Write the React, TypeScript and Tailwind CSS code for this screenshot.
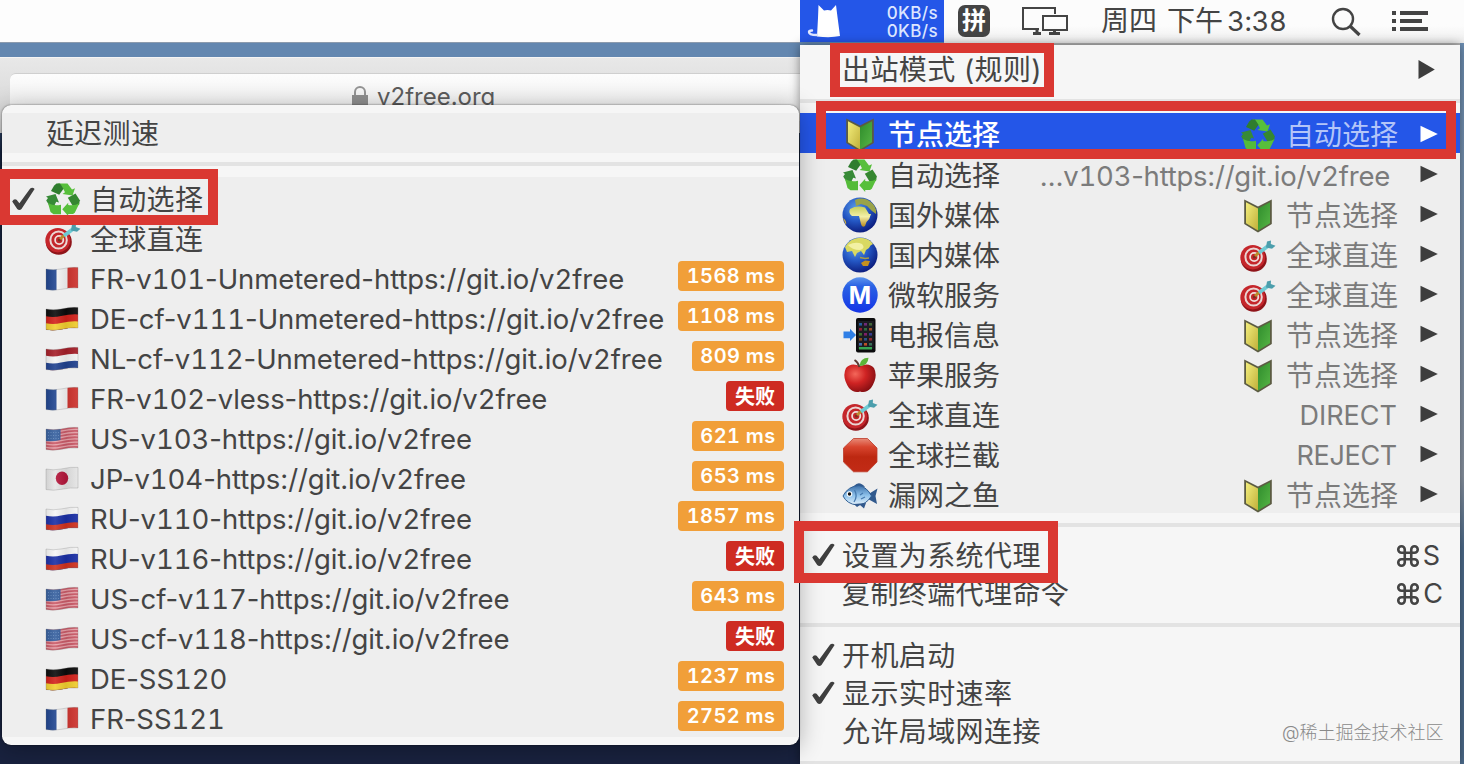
import React from "react";

type IconName =
  | "recycle" | "target" | "fr" | "de" | "nl" | "us" | "jp" | "ru"
  | "beginner" | "africa" | "asia" | "metro" | "phone" | "apple" | "stop" | "fish";

const FONT = "font-['Inter','Noto_Sans_CJK_SC',sans-serif]";
const FLAG_SHAPE = "M1 3 Q8 4.6 16 3 Q26 .6 33 1.4 V22 Q26 21.4 17 23.2 Q8 25 1 23.6 Z";

function Defs() {
  return (
    <svg className="absolute h-0 w-0" aria-hidden="true">
      <defs>
        <linearGradient id="wave" x1="0" y1="0" x2="1" y2="0">
          <stop offset="0" stopColor="#000" stopOpacity=".1" />
          <stop offset=".3" stopColor="#fff" stopOpacity=".1" />
          <stop offset=".62" stopColor="#000" stopOpacity=".08" />
          <stop offset="1" stopColor="#fff" stopOpacity=".08" />
        </linearGradient>
        <clipPath id="flag">
          <path d={FLAG_SHAPE} />
        </clipPath>
        <radialGradient id="ocean" cx=".38" cy=".3" r=".75">
          <stop offset="0" stopColor="#5a9be6" />
          <stop offset=".5" stopColor="#2457c4" />
          <stop offset="1" stopColor="#0a1878" />
        </radialGradient>
        <linearGradient id="land" x1="0" y1="0" x2="0" y2="1">
          <stop offset="0" stopColor="#c8cf5a" />
          <stop offset=".5" stopColor="#f3f0a8" />
          <stop offset="1" stopColor="#b98a1e" />
        </linearGradient>
        <linearGradient id="metroBlue" x1="0" y1="0" x2="0" y2="1">
          <stop offset="0" stopColor="#5b93ec" />
          <stop offset=".25" stopColor="#2a62e4" />
          <stop offset="1" stopColor="#1434e6" />
        </linearGradient>
        <radialGradient id="appleRed" cx=".35" cy=".35" r=".75">
          <stop offset="0" stopColor="#f4675a" />
          <stop offset=".45" stopColor="#cf2323" />
          <stop offset="1" stopColor="#7c0c10" />
        </radialGradient>
        <linearGradient id="stopRed" x1="0" y1="0" x2="0" y2="1">
          <stop offset="0" stopColor="#e88a77" />
          <stop offset=".25" stopColor="#d8452e" />
          <stop offset=".55" stopColor="#bd2811" />
          <stop offset="1" stopColor="#c22b16" />
        </linearGradient>
        <linearGradient id="leafYellow" x1="0" y1="0" x2="1" y2="1">
          <stop offset="0" stopColor="#f3ee7c" />
          <stop offset="1" stopColor="#c0b03a" />
        </linearGradient>
        <linearGradient id="leafGreen" x1="0" y1="0" x2="1" y2="1">
          <stop offset="0" stopColor="#2f8c2c" />
          <stop offset="1" stopColor="#56b545" />
        </linearGradient>
        <linearGradient id="fishBlue" x1="0" y1="0" x2="0" y2="1">
          <stop offset="0" stopColor="#3a6ea8" />
          <stop offset=".5" stopColor="#8cc0ea" />
          <stop offset="1" stopColor="#e4f1fb" />
        </linearGradient>
      </defs>
    </svg>
  );
}

function Flag({ children }: { children: React.ReactNode }) {
  return (
    <svg viewBox="0 0 34 26" className="h-[26px] w-[34px]">
      <g clipPath="url(#flag)">
        {children}
        <rect width="34" height="26" fill="url(#wave)" />
      </g>
      <path d={FLAG_SHAPE} fill="none" stroke="#777" strokeOpacity=".35" strokeWidth=".8" />
    </svg>
  );
}

function wavyBand(y: number, fill: string) {
  return <path d={`M0 ${y + 0.6} Q8 ${y + 2.4} 16 ${y + 0.6} Q26 ${y - 1.8} 34 ${y - 1} V30 H0 Z`} fill={fill} />;
}

function Icon({ name }: { name: IconName }) {
  switch (name) {
    case "fr":
      return (
        <Flag>
          <rect width="12" height="26" fill="#1f448f" />
          <rect x="11.5" width="12" height="26" fill="#f6f6f6" />
          <rect x="22.5" width="12" height="26" fill="#cf342f" />
        </Flag>
      );
    case "de":
      return (
        <Flag>
          <rect width="34" height="26" fill="#0b0b0b" />
          {wavyBand(9.5, "#d3221b")}
          {wavyBand(16.5, "#f2cf2f")}
        </Flag>
      );
    case "nl":
      return (
        <Flag>
          <rect width="34" height="26" fill="#a51e28" />
          {wavyBand(9, "#f4f4f4")}
          {wavyBand(16, "#20418f")}
        </Flag>
      );
    case "ru":
      return (
        <Flag>
          <rect width="34" height="26" fill="#f6f6f6" />
          {wavyBand(9, "#1a2fa6")}
          {wavyBand(17.5, "#d0321f")}
        </Flag>
      );
    case "us":
      return (
        <Flag>
          <rect width="34" height="26" fill="#cb5a68" />
          {[4.5, 7.7, 10.9, 14.1, 17.3, 20.5].map((y) => (
            <path key={y} d={`M0 ${y + 0.6} Q8 ${y + 2.4} 16 ${y + 0.6} Q26 ${y - 1.8} 34 ${y - 1}`} fill="none" stroke="#e8a3aa" strokeWidth="1.3" />
          ))}
          <path d="M0 0 H15.5 V14 Q8 15.8 0 15 Z" fill="#36609f" />
          <path d="M3 6.5h11M3 9.5h11M3 12.5h11" stroke="#6a8fc2" strokeWidth=".8" strokeDasharray="1 1.5" />
        </Flag>
      );
    case "jp":
      return (
        <Flag>
          <rect width="34" height="26" fill="#e6e6e6" />
          <ellipse cx="17" cy="12.3" rx="6.2" ry="6.8" fill="#b5173c" />
        </Flag>
      );
    case "recycle":
      return (
        <svg viewBox="0 0 36 34" className="h-[34px] w-9">
          <path d="M12.5 1.5 H22.5 L27 7.5 L30 6.2 L27.5 13.5 L17.5 12 L20 10.3 L18 6.5 Z" fill="#57bf3b" />
          <path d="M11.5 1.5 H15 L18.5 6.8 L14.2 12.8 L6 9 L9 3.8 Z" fill="#2f7d2e" />
          <path d="M1 14.5 L10.5 12 L14 20.5 L11.2 19.8 L9.4 23.4 L4 23 L1.2 18.5 L3 16 Z" fill="#378a37" />
          <path d="M3 21 Q9 24.5 16 22.8 V32.2 H8.5 L5.5 30 Z" fill="#54bb39" />
          <path d="M22.8 15.8 L30.5 11.5 L34.8 18.2 L34 23 L27.5 23.5 Z" fill="#358730" />
          <path d="M17.3 27.3 L23.2 20.8 V23 Q30 24 34.5 21 L29.8 30.8 L28 32 H23.2 V34 Z" fill="#57bf3b" />
        </svg>
      );
    case "target":
      return (
        <svg viewBox="0 0 36 32" className="h-8 w-9">
          <ellipse cx="13.8" cy="18.9" rx="13" ry="12.8" fill="#8f1419" />
          <ellipse cx="12.8" cy="17.2" rx="12.4" ry="12.2" fill="#c5262b" />
          <ellipse cx="13.6" cy="17" rx="8.2" ry="8.6" fill="none" stroke="#ead6d4" strokeWidth="2" />
          <circle cx="14.2" cy="17" r="4.1" fill="#c5262b" stroke="#efdedb" strokeWidth="1.8" />
          <circle cx="14.4" cy="17" r="1.6" fill="#7d3020" />
          <path d="M15 16 L19.5 12" stroke="#bb8b2d" strokeWidth="3" />
          <path d="M19 12.8 L29 5.2" stroke="#6fcad3" strokeWidth="3.8" />
          <path d="M26 7.5 L27 1.5 L31 .5 L30.8 4 L35.5 5.8 L32 8.8 Z" fill="#4b9eac" />
        </svg>
      );
    case "beginner":
      return (
        <svg viewBox="0 0 36 36" className="h-9 w-9">
          <path d="M4.2 1.5 L18 8.5 L31.8 1.5 V26 L18 34.5 L4.2 26 Z" fill="#5b5b42" />
          <path d="M6 4.2 L18 10.4 V32.4 L6 25.2 Z" fill="url(#leafYellow)" />
          <path d="M30 4.2 L18 10.4 V32.4 L30 25.2 Z" fill="url(#leafGreen)" />
        </svg>
      );
    case "africa":
      return (
        <svg viewBox="0 0 36 36" className="h-9 w-9">
          <circle cx="18" cy="18" r="17.5" fill="url(#ocean)" />
          <path d="M13 3 Q22 -1 30 6 Q35 11 34 17 L30 14 L25 9 L19 7 L14 9 Z" fill="#9aa349" />
          <path d="M8 12 Q15 8 23 10.5 L27 17 H29 Q28 22 24.5 25 L23 29 Q20 31 19 27 L17 19 H10 Q6 16 8 12 Z" fill="url(#land)" />
          <path d="M1 21 Q5 24 4 28 Z" fill="#d5b33d" />
        </svg>
      );
    case "asia":
      return (
        <svg viewBox="0 0 36 36" className="h-9 w-9">
          <circle cx="18" cy="18" r="17.5" fill="url(#ocean)" />
          <path d="M3 10 Q8 1 18 .8 Q27 1 31 7 Q28 8 27 11 L24 13 L22 18 L19 14 L15 16 L13 20 L10 14 L5 15 Z" fill="#d9d962" />
          <path d="M6 8 Q14 4 20 7 Q24 11 18 13 Q10 13 6 8Z" fill="#f2f1a4" />
          <path d="M19 26 L23 23.5 L28 24 L26 29 L21 29 Z" fill="#c5911f" />
          <path d="M18 20.5 L23 21.5 L27 21" stroke="#a99d44" strokeWidth="1.3" fill="none" />
        </svg>
      );
    case "metro":
      return (
        <svg viewBox="0 0 36 36" className="h-9 w-9">
          <circle cx="18" cy="18" r="17.7" fill="url(#metroBlue)" />
          <text x="18" y="26.8" textAnchor="middle" className="fill-white font-['Inter'] text-[24px] font-bold">M</text>
        </svg>
      );
    case "phone":
      return (
        <svg viewBox="0 0 36 36" className="h-9 w-9">
          <rect x="14" y="1" width="19.5" height="34.5" rx="2" fill="#0b0b0d" />
          <rect x="15.8" y="4" width="16" height="28" fill="#1b1c22" />
          {[6, 11, 16, 21, 26].map((y, i) => (
            <g key={y}>
              <rect x="17" y={y} width="3" height="2.6" fill={["#245c9c", "#8f2038", "#3d6e2d", "#8a4c1d", "#4467a8"][i]} />
              <rect x="22" y={y} width="3" height="2.6" fill={["#6d2b77", "#2f6c3f", "#7e1f68", "#2c518a", "#ba5127"][i]} />
              <rect x="27" y={y} width="3" height="2.6" fill={["#416537", "#9a4e28", "#353b8d", "#902b30", "#396d59"][i]} />
            </g>
          ))}
          <rect x="17" y="30" width="13" height="2.5" fill="#36a653" />
          <path d="M1.5 14.6 H8 V11.8 L14 18 L8 24 V21.3 H1.5 Z" fill="#2f7fe6" />
        </svg>
      );
    case "apple":
      return (
        <svg viewBox="0 0 36 36" className="h-9 w-9">
          <path d="M18 9 Q27 5 32 11 Q36.5 20 29 31 Q24 36.5 18 34.5 Q12 36.5 7 31 Q-.5 20 4 11 Q9 5 18 9 Z" fill="url(#appleRed)" />
          <path d="M17.5 10 Q16 5 12.5 3" stroke="#5c3b33" strokeWidth="2" fill="none" />
          <path d="M17.5 9 Q18 1 26.5 .8 Q26 9 17.5 9 Z" fill="#5cb438" />
        </svg>
      );
    case "stop":
      return (
        <svg viewBox="0 0 36 36" className="h-9 w-9">
          <path d="M11.5 1.5 H25.5 L35 11 V25 L25.5 34.8 H11.5 L1.5 25 V11 Z" fill="url(#stopRed)" stroke="#bc3a28" strokeWidth=".8" />
        </svg>
      );
    case "fish":
      return (
        <svg viewBox="0 0 36 36" className="h-9 w-9">
          <path d="M12 9 Q17 3 23 10 Z" fill="#31598d" />
          <path d="M25 18 L35.5 11.5 L33.5 19 L35 27 L26 22 Z" fill="#31598d" />
          <path d="M1 19 Q6 9 17 8.5 Q25 10 29.5 19 Q24 28 15 28 Q5 27 1 19 Z" fill="url(#fishBlue)" stroke="#2e5d93" strokeWidth="1" />
          <path d="M12 27 L15 30 L18 28 L22 31.5 L24 26" fill="#31598d" />
          <path d="M12.5 13 Q16 19 12 25 M18 18 L21 16 M19 22 L23 20" stroke="#477aaf" fill="none" strokeWidth="1.3" />
          <circle cx="7.5" cy="17" r="2.8" fill="#fff" />
          <circle cx="7.5" cy="17" r="1.7" fill="#111" />
        </svg>
      );
  }
}

function Check() {
  return (
    <svg viewBox="0 0 24 24" className="h-6 w-6">
      <path d="M1.2 14.4 Q3.3 10.9 5.6 12.8 L8.4 16.3 L19.2 1.4 Q21.6 -.4 23.6 2 L10.5 22 Q8.4 24 6.2 22 Z" fill="#3f3f3f" />
    </svg>
  );
}

function Arrow({ className }: { className: string }) {
  return (
    <svg viewBox="0 0 18 18" className={className} preserveAspectRatio="none">
      <path d="M.5 .8 L17.8 9 L.5 17.2 Z" fill="currentColor" />
    </svg>
  );
}

/** Sets digit runs in fixed-width figures and leaves punctuation proportional. */
function Figures({ text }: { text: string }) {
  return (
    <>
      {text.split(/(\d+)/).map((part, i) =>
        i % 2 ? <span key={i} className="tabular-nums">{part}</span> : part,
      )}
    </>
  );
}

type Node = { icon: IconName; label: string; ms?: string; fail?: boolean; checked?: boolean; cjk?: boolean };

const nodes: Node[] = [
  { icon: "recycle", label: "自动选择", checked: true, cjk: true },
  { icon: "target", label: "全球直连", cjk: true },
  { icon: "fr", label: "FR-v101-Unmetered-https://git.io/v2free", ms: "1568 ms" },
  { icon: "de", label: "DE-cf-v111-Unmetered-https://git.io/v2free", ms: "1108 ms" },
  { icon: "nl", label: "NL-cf-v112-Unmetered-https://git.io/v2free", ms: "809 ms" },
  { icon: "fr", label: "FR-v102-vless-https://git.io/v2free", fail: true },
  { icon: "us", label: "US-v103-https://git.io/v2free", ms: "621 ms" },
  { icon: "jp", label: "JP-v104-https://git.io/v2free", ms: "653 ms" },
  { icon: "ru", label: "RU-v110-https://git.io/v2free", ms: "1857 ms" },
  { icon: "ru", label: "RU-v116-https://git.io/v2free", fail: true },
  { icon: "us", label: "US-cf-v117-https://git.io/v2free", ms: "643 ms" },
  { icon: "us", label: "US-cf-v118-https://git.io/v2free", fail: true },
  { icon: "de", label: "DE-SS120", ms: "1237 ms" },
  { icon: "fr", label: "FR-SS121", ms: "2752 ms" },
];

function NodeRow({ node }: { node: Node }) {
  return (
    <li className="flex h-10 items-center bg-[#eeeeee] pl-[9px] pr-[15px]">
      <span className="flex w-[34px] shrink-0 pt-1">{node.checked && <Check />}</span>
      <span className="flex w-[45px] shrink-0 items-center pt-1"><Icon name={node.icon} /></span>
      <span className={`flex-1 whitespace-nowrap leading-9 ${node.cjk ? "pt-[5px] tracking-[0.3px]" : "pt-1 text-[27.5px] tracking-[-0.07px]"}`}>
        <Figures text={node.label} />
      </span>
      {node.ms && (
        <span className={`mb-0.5 flex h-[30px] shrink-0 items-center justify-center rounded-[4px] bg-[#f19f39] text-[20px] font-semibold tracking-[0.4px] text-white ${node.ms.length === 7 ? "w-[106px]" : "w-[92px]"}`}>
          <span><Figures text={node.ms} /></span>
        </span>
      )}
      {node.fail && (
        <span className="mb-0.5 flex h-[30px] w-[58px] shrink-0 items-center justify-center rounded-[4px] bg-[#ce2b22] pt-px text-[20px] font-bold leading-none text-white">失败</span>
      )}
    </li>
  );
}

type Group = { icon: IconName; label: string; valueIcon?: IconName; value: string; style: string; active?: boolean };

const groups: Group[] = [
  { icon: "beginner", label: "节点选择", valueIcon: "recycle", value: "自动选择", style: "pr-[22px]", active: true },
  { icon: "recycle", label: "自动选择", value: "…v103-https://git.io/v2free", style: "pr-[30px] text-[27.5px] tracking-[-0.25px]" },
  { icon: "africa", label: "国外媒体", valueIcon: "beginner", value: "节点选择", style: "pr-[22px]" },
  { icon: "asia", label: "国内媒体", valueIcon: "target", value: "全球直连", style: "pr-[22px]" },
  { icon: "metro", label: "微软服务", valueIcon: "target", value: "全球直连", style: "pr-[22px]" },
  { icon: "phone", label: "电报信息", valueIcon: "beginner", value: "节点选择", style: "pr-[22px]" },
  { icon: "apple", label: "苹果服务", valueIcon: "beginner", value: "节点选择", style: "pr-[22px]" },
  { icon: "target", label: "全球直连", value: "DIRECT", style: "pr-[23px] text-[27px]" },
  { icon: "stop", label: "全球拦截", value: "REJECT", style: "pr-[23px] text-[27px] tracking-[-0.3px]" },
  { icon: "fish", label: "漏网之鱼", valueIcon: "beginner", value: "节点选择", style: "pr-[22px]" },
];

function GroupRow({ group }: { group: Group }) {
  return (
    <li className={`flex h-10 items-center pl-[42px] pr-[22px] ${group.active ? "bg-[#2456e8] text-white" : "bg-[#eeeeee]"}`}>
      <span className="flex w-[46px] items-center pt-[3px]"><Icon name={group.icon} /></span>
      <span className={`flex-1 whitespace-nowrap leading-9 ${group.active ? "pt-1 font-medium" : "pt-[5px]"}`}>{group.label}</span>
      <span className={`flex items-center gap-[10px] leading-9 ${group.style} ${group.active ? "pt-1 text-[#b3c5f8]" : "pt-[5px] text-[#7b7b7b]"}`}>
        {group.valueIcon && <Icon name={group.valueIcon} />}
        <span className="whitespace-nowrap"><Figures text={group.value} /></span>
      </span>
      <Arrow className={`mt-0.5 h-[18px] w-[18px] ${group.active ? "text-white" : "text-[#3d3d3d]"}`} />
    </li>
  );
}

function Item({ label, checked, shortcut, end }: { label: string; checked?: boolean; shortcut?: string; end?: string }) {
  return (
    <li className={`flex h-[38px] items-center pl-[11px] ${end ?? ""}`}>
      <span className="flex w-[31px]">{checked && <Check />}</span>
      <span className="flex-1 whitespace-nowrap pt-px leading-9 tracking-[0.4px]">{label}</span>
      {shortcut && (
        <span className="flex items-center gap-[2px] pt-px text-[27px] leading-9">
          <svg viewBox="0 0 24 24" className="h-[26px] w-[26px]" fill="none" stroke="#444" strokeWidth="2.4">
            <path d="M15 6v12a3 3 0 1 0 3-3H6a3 3 0 1 0 3 3V6a3 3 0 1 0-3 3h12a3 3 0 1 0-3-3" />
          </svg>
          {shortcut}
        </span>
      )}
    </li>
  );
}

function Separator({ className }: { className: string }) {
  return <li className={`h-1 bg-[#e3e3e3] ${className}`} />;
}

function MenuBar() {
  return (
    <header className="flex h-[45px] items-start bg-[#6387b0]">
      <div className="h-[43px] w-[800px] border-b border-[#8c9bae] bg-[#fdfdfd]" />
      <div className="flex h-[42px] w-36 items-start justify-between bg-[#2456e8] pl-[7px] pr-[6px] pt-1">
        <svg viewBox="0 0 34 34" className="h-[34px] w-[34px]">
          <path d="M11.5 1 L17 6.5 Q20.5 5.5 24 6.5 L29 1 L30.5 13 L33 32 Q24 34 10 32.5 L11 14 Z" fill="#fff" />
          <path d="M10 31 Q2 31 2 28 Q2 26.5 5 26.5" fill="none" stroke="#dfe7ff" strokeWidth="2.4" strokeLinecap="round" />
        </svg>
        <div className="flex flex-col text-[17px] font-medium leading-[18px] tracking-[0.4px] text-[#dde6ff]">
          <span>0KB/s</span>
          <span>0KB/s</span>
        </div>
      </div>
      <div className="flex h-[45px] w-[520px] items-start border-b-2 border-[#b5b5b5] bg-linear-to-b from-[#fcfcfc] from-60% to-[#eeeeee] text-[#444]">
        <span className="ml-[14px] mt-[5px] flex h-8 w-8 items-center justify-center rounded-[7px] bg-[#444] text-[24px] font-bold leading-8 text-white">拼</span>
        <svg viewBox="0 0 48 30" className="ml-[31px] mt-[6px] h-[30px] w-12" fill="none" stroke="#444" strokeWidth="2">
          <path d="M18 23 H2 V2 H34 V8" />
          <rect x="22" y="10" width="24" height="14" />
          <path d="M12 27.5 h8 M16 24 v3 M28 27.5 h11 M33.5 25 v2" strokeWidth="3" />
        </svg>
        <span className="ml-8 mt-[3px] flex w-[186px] whitespace-nowrap leading-9">
          周四<span className="ml-[10px]">下午</span>
          <span className="ml-1 text-[27.5px] tabular-nums tracking-[-0.4px]">3:38</span>
        </span>
        <svg viewBox="0 0 30 30" className="ml-[44px] mt-[7px] h-[30px] w-[30px]" fill="none" stroke="#444" strokeWidth="2.4">
          <circle cx="12" cy="12" r="10" />
          <path d="M19 19 L28.5 28" strokeWidth="3.2" />
        </svg>
        <svg viewBox="0 0 36 22" className="ml-[31px] mt-[10px] h-[22px] w-9" fill="#444">
          <path d="M0 1h4v4H0zM0 9h4v4H0zM0 17h4v4H0zM8 1h28v4H8zM8 9h22v4H8zM8 17h28v4H8z" />
        </svg>
      </div>
    </header>
  );
}

function BrowserWindow() {
  return (
    <div className="mt-3 h-[76px] w-[800px] border-t border-[#f4f4f4] bg-linear-to-b from-[#e8e8e8] to-[#d2d2d2] pl-[10px] pt-[15px]">
      <div className="flex h-12 items-start rounded-tl-md border-t border-[#cfcfcf] bg-linear-to-b from-[#fdfdfd] to-[#e8e8e8] pl-[341px] pt-[4px] text-[24px] leading-[38px] text-[#5c5c5c]">
        <svg viewBox="0 0 18 24" className="mt-[7px] h-6 w-[18px]">
          <path d="M4 12 V7 a5 5 0 0 1 10 0 V12" fill="none" stroke="#949494" strokeWidth="2" />
          <rect x="1" y="10" width="16" height="14" fill="#8e8e8e" />
        </svg>
        <span className="ml-2">v2free.org</span>
      </div>
    </div>
  );
}

export default function App() {
  return (
    <div className={`relative h-[764px] w-[1464px] overflow-hidden bg-linear-to-b from-[#6387b0] from-10% via-[#15233f] via-20% to-[#19223f] text-[28px] text-[#444444] ${FONT}`}>
      <Defs />
      <MenuBar />
      <BrowserWindow />

      <div className="absolute bottom-0 right-0 top-[43px] w-1 bg-linear-to-b from-[#6d8fb3] from-0% via-[#8b95a3] via-60% to-[#4e6d8d] to-70%" />

      <ul className="absolute left-[800px] top-[45px] h-[719px] w-[660px] bg-[#f6f6f6] pt-[6px] shadow-[0_0_10px_rgba(0,0,0,0.45)]">
        <li className="flex h-[38px] items-center pl-[42px] pr-[25px]">
          <span className="flex-1 whitespace-nowrap leading-9 tracking-[0.4px]">出站模式 (规则)</span>
          <Arrow className="mb-[2px] h-[21px] w-[17px] text-[#3d3d3d]" />
        </li>
        <Separator className="mb-[10px] mt-[10px]" />
        {groups.map((g) => (
          <GroupRow key={g.label} group={g} />
        ))}
        <Separator className="mb-[9px] mt-[10px]" />
        <Item label="设置为系统代理" checked shortcut="S" end="pr-[20px]" />
        <Item label="复制终端代理命令" shortcut="C" end="pr-[17px]" />
        <Separator className="mb-[9px] mt-[11px]" />
        <Item label="开机启动" checked />
        <Item label="显示实时速率" checked />
        <Item label="允许局域网连接" />
        <Separator className="mt-[11px]" />
      </ul>

      <ul className="absolute left-[2px] top-[105px] h-[640px] w-[797px] overflow-hidden rounded-[9px] bg-[#f6f6f6] pt-2 shadow-[0_0_2px_rgba(0,0,0,0.6),0_4px_24px_rgba(0,0,0,0.3)]">
        <li className="flex h-10 items-center bg-[#eeeeee] pl-11 pt-0.5 leading-9 tracking-[0.3px]">延迟测速</li>
        <Separator className="mb-[11px] mt-[9px]" />
        {nodes.map((n) => (
          <NodeRow key={n.label} node={n} />
        ))}
      </ul>

      <div className="absolute left-0 top-[169px] h-14 w-[218px] border-[10px] border-[#da3832]" />
      <div className="absolute left-[830px] top-[43px] h-[54px] w-[224px] border-[10px] border-[#da3832]" />
      <div className="absolute left-[816px] top-[101px] h-[58px] w-[640px] border-[10px] border-[#da3832]" />
      <div className="absolute left-[794px] top-[521px] h-[62px] w-[264px] border-[10px] border-[#da3832]" />

      <span className="absolute left-[1282px] top-[722px] whitespace-nowrap text-[18px] font-light leading-[22px] text-[#8a8a8a]">@稀土掘金技术社区</span>
    </div>
  );
}
